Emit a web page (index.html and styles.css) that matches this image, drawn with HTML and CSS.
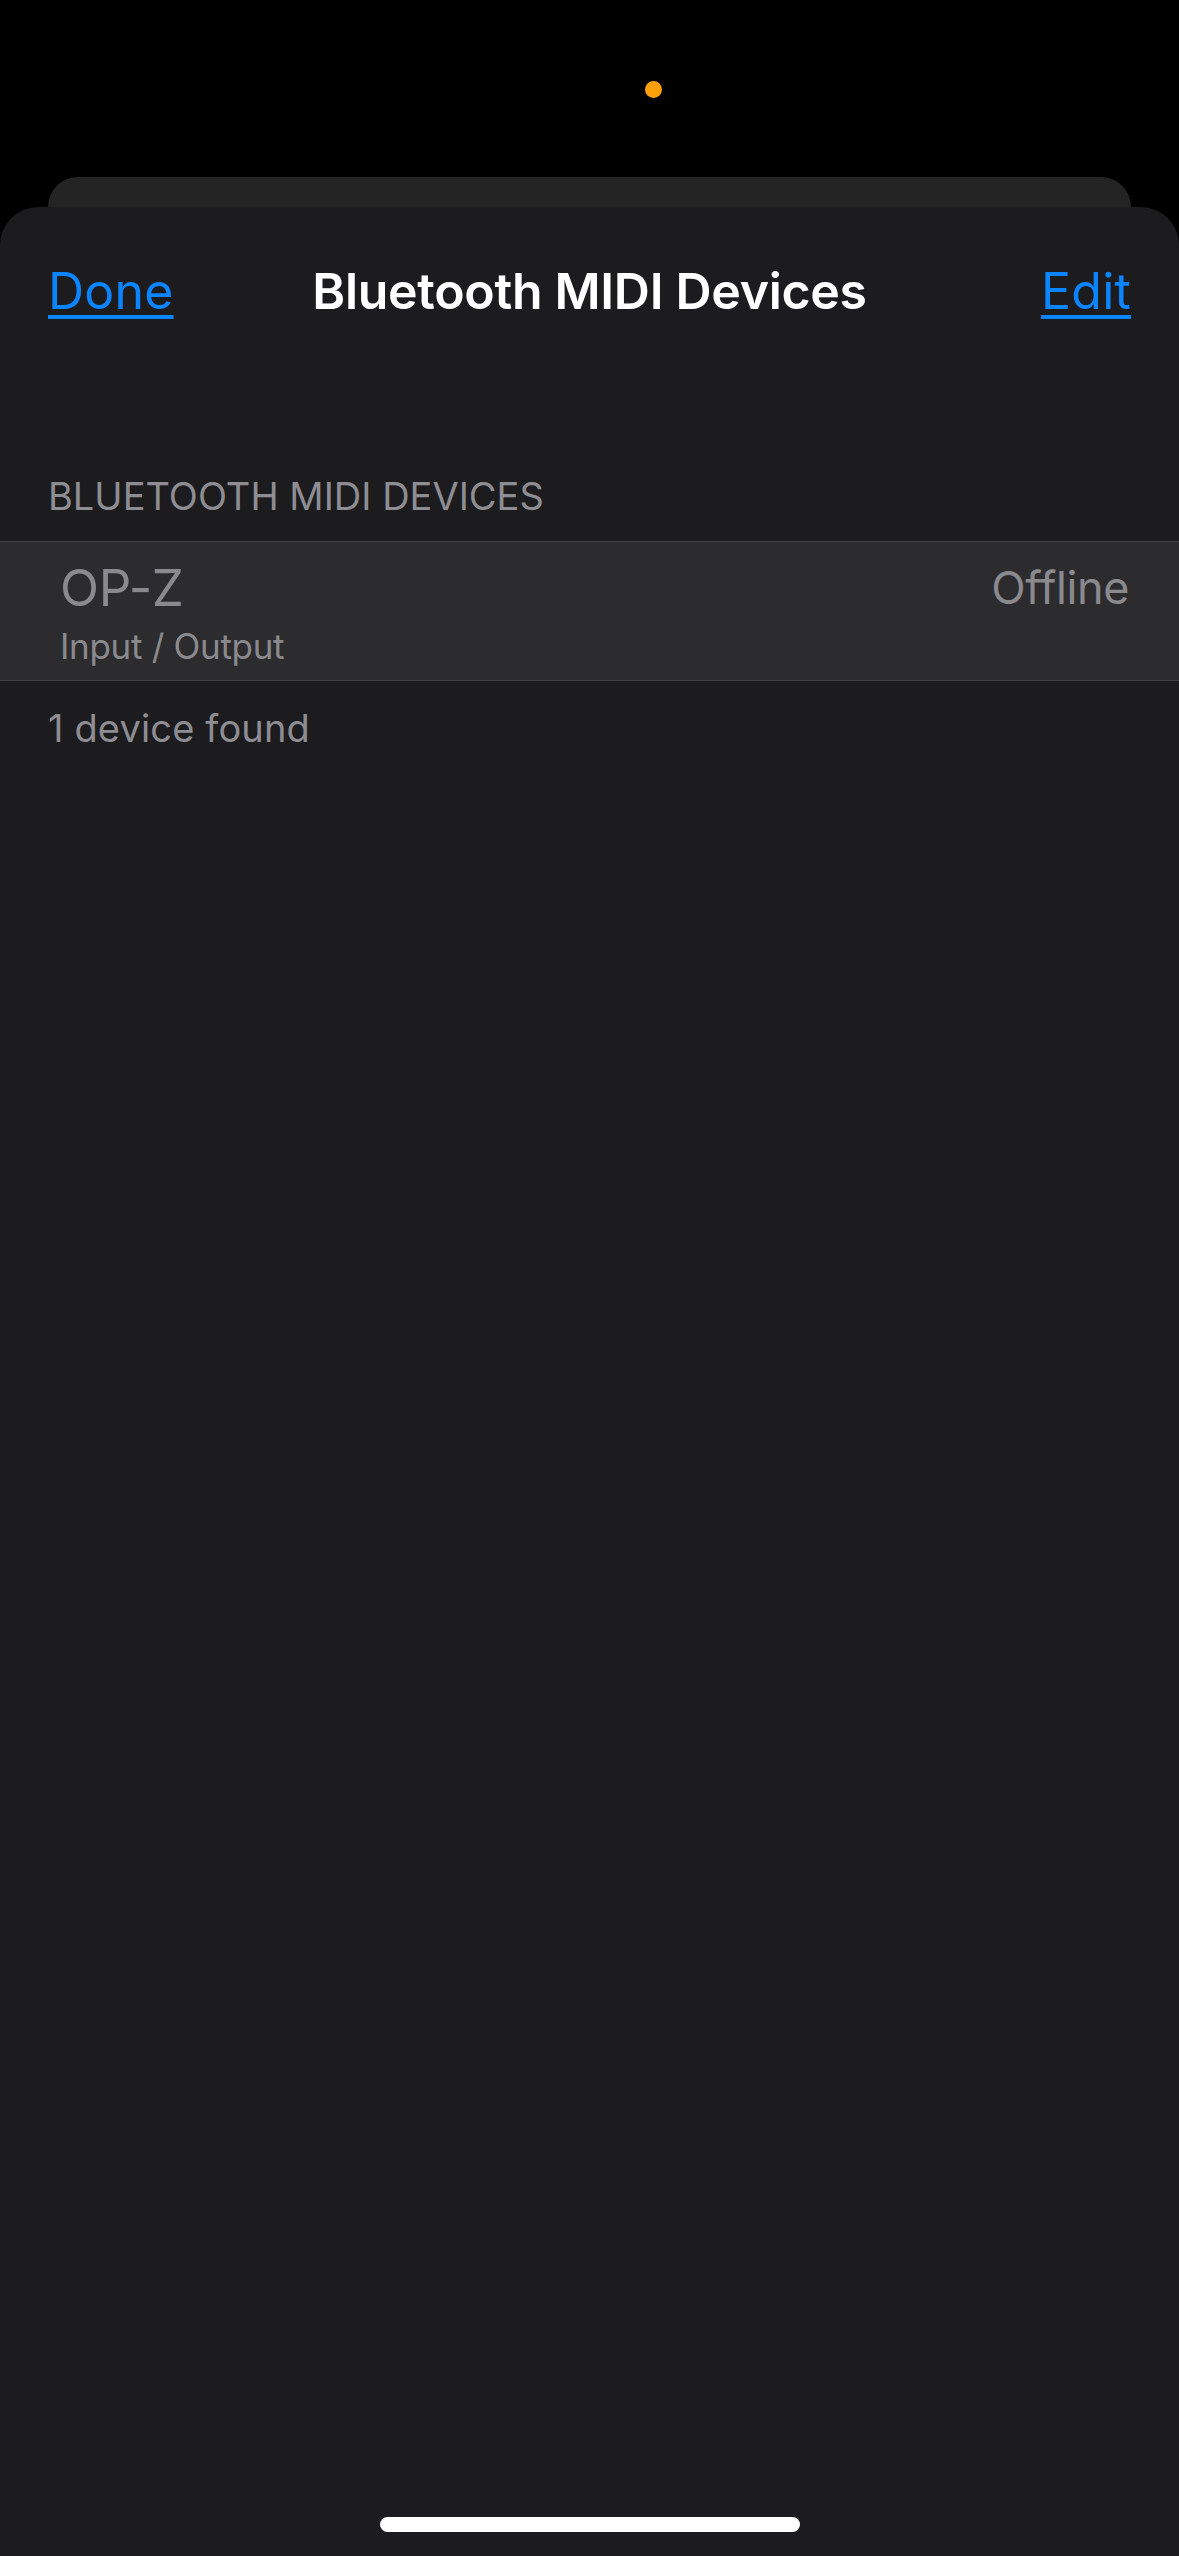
FILE: index.html
```html
<!DOCTYPE html>
<html lang="en">
<head>
<meta charset="utf-8">
<title>Bluetooth MIDI Devices</title>
<link rel="stylesheet" href="styles.css">
</head>
<body>
<div class="screen">
  <div class="status-bar">
    <span class="privacy-dot"></span>
  </div>
  <div class="back-card"></div>
  <div class="sheet">
    <header class="nav">
      <a class="nav-btn nav-done">Done</a>
      <h1 class="nav-title">Bluetooth MIDI Devices</h1>
      <a class="nav-btn nav-edit">Edit</a>
    </header>
    <section class="group">
      <div class="group-header">BLUETOOTH MIDI DEVICES</div>
      <div class="list">
        <div class="cell">
          <div class="cell-main">
            <div class="cell-title">OP-Z</div>
            <div class="cell-detail">Offline</div>
          </div>
          <div class="cell-sub">Input / Output</div>
        </div>
      </div>
      <div class="group-footer">1 device found</div>
    </section>
    <div class="spacer"></div>
    <div class="home-indicator"></div>
  </div>
</div>
</body>
</html>
```

FILE: styles.css
```css
* { box-sizing: border-box; }
html, body {
  margin: 0;
  padding: 0;
  background: #000;
}
body {
  font-family: Inter, "Noto Sans", sans-serif;
  width: 1179px;
  height: 2556px;
  overflow: hidden;
}
.screen {
  width: 1179px;
  height: 2556px;
  display: flex;
  flex-direction: column;
  background: #000;
}
.status-bar {
  height: 177px;
  display: flex;
  padding-left: 645px;
  padding-top: 81px;
}
.privacy-dot {
  width: 17px;
  height: 17px;
  border-radius: 50%;
  background: #ff9f0a;
}
.back-card {
  height: 30px;
  margin: 0 48px;
  background: #242424;
  border-radius: 32px 32px 0 0;
}
.sheet {
  flex: 1;
  display: flex;
  flex-direction: column;
  background: #1c1c1e;
  border-radius: 38px 38px 0 0;
}
.nav {
  height: 168px;
  display: grid;
  grid-template-columns: 1fr auto 1fr;
  align-items: center;
  padding: 0 48px 0 48px;
}
.nav-btn {
  font-size: 50px;
  line-height: 168px;
  color: #0a84ff;
  text-decoration: underline;
  text-decoration-thickness: 4px;
  text-underline-offset: 6px;
  letter-spacing: 0.2px;
}
.nav-done { justify-self: start; }
.nav-edit { justify-self: end; }
.nav-title {
  margin: 0;
  font-size: 50px;
  font-weight: 600;
  line-height: 168px;
  color: #fff;
  letter-spacing: -0.3px;
}
.group {
  display: flex;
  flex-direction: column;
}
.group-header {
  padding: 97px 48px 21px;
  font-size: 38px;
  line-height: 48px;
  color: #8d8d93;
  letter-spacing: 0;
}
.list {
  background: #2c2c2e;
  border-top: 1px solid #3f3f42;
  border-bottom: 1px solid #3f3f42;
}
.cell {
  display: flex;
  flex-direction: column;
  padding: 18px 50px 12px 60px;
}
.cell-main {
  display: flex;
  align-items: center;
  justify-content: space-between;
  height: 56px;
}
.cell-title {
  font-size: 51px;
  line-height: 56px;
  color: #8a8a8e;
  letter-spacing: -0.3px;
}
.cell-detail {
  font-size: 45px;
  line-height: 56px;
  color: #8a8a8e;
  letter-spacing: -0.4px;
}
.cell-sub {
  margin-top: 8px;
  font-size: 35px;
  line-height: 44px;
  color: #8a8a8e;
  letter-spacing: -0.3px;
}
.group-footer {
  padding: 23px 48px 0;
  font-size: 38px;
  line-height: 48px;
  color: #8d8d93;
  letter-spacing: 0.15px;
}
.spacer { flex: 1; }
.home-indicator {
  align-self: center;
  width: 420px;
  height: 15px;
  border-radius: 8px;
  background: #fff;
  margin-bottom: 24px;
}
```
